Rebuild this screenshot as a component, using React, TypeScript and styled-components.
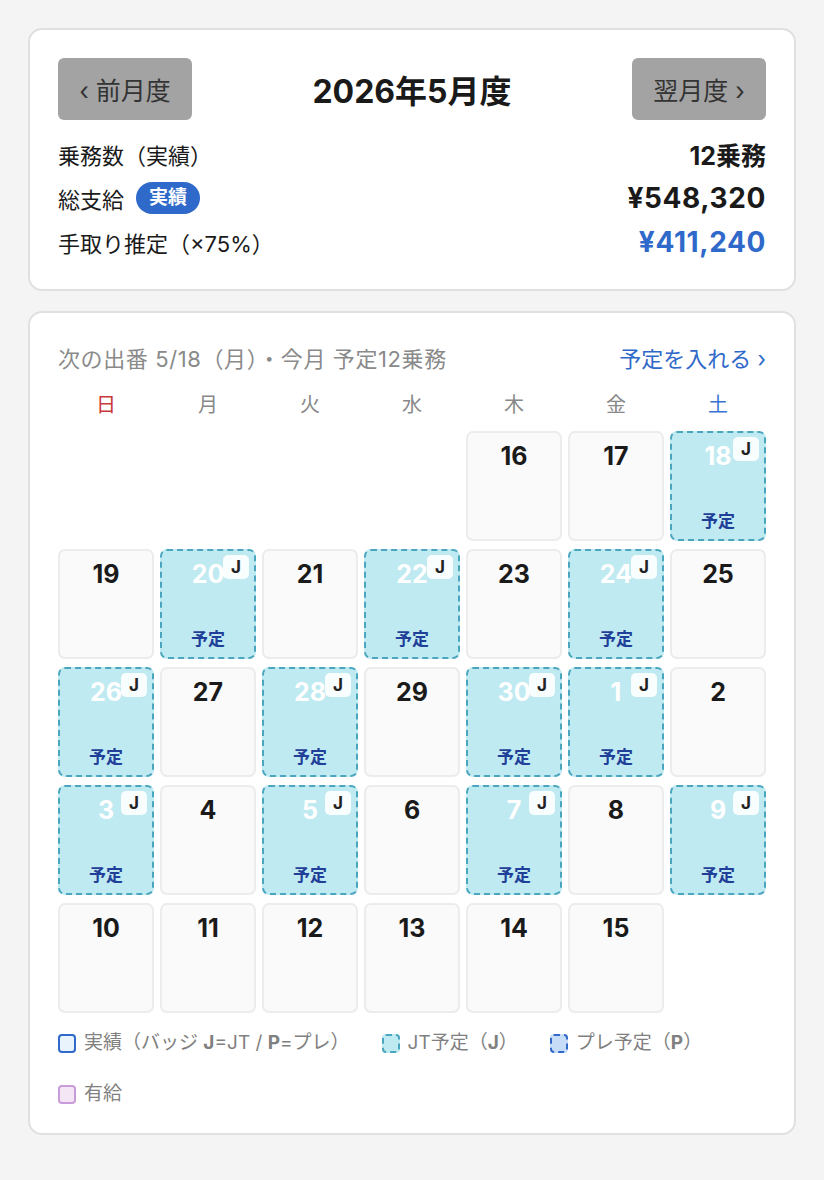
import React from 'react';
import styled, { createGlobalStyle } from 'styled-components';

const GlobalStyle = createGlobalStyle`
  * { box-sizing: border-box; }
  body {
    margin: 0;
    background: #f4f4f4;
    font-family: Inter, "Noto Sans CJK JP", sans-serif;
    color: #1a1a1a;
  }
`;

const Page = styled.div`
  padding: 28px;
  display: flex;
  flex-direction: column;
  gap: 20px;
`;

const Card = styled.section`
  background: #fff;
  border: 2px solid #e0e0e0;
  border-radius: 14px;
  padding: 28px 28px 25px;
`;

const NavRow = styled.div`
  display: flex;
  align-items: center;
  justify-content: space-between;
  margin-bottom: 12px;
`;

const NavButton = styled.button`
  width: 134px;
  height: 62px;
  border: none;
  border-radius: 6px;
  background: #a3a3a3;
  color: #333;
  font-family: inherit;
  font-size: 25px;
  padding: 0;
`;

const Title = styled.h1`
  margin: 0;
  font-size: 32px;
  font-weight: 700;
`;

const StatRow = styled.div`
  display: flex;
  align-items: center;
  justify-content: space-between;
  height: 44px;
`;

const StatLabel = styled.div`
  display: flex;
  align-items: center;
  gap: 12px;
  font-size: 22px;
`;

const StatValue = styled.div<{ $accent?: boolean; $big?: boolean }>`
  font-size: ${p => (p.$big ? '28px' : '25px')};
  font-weight: 700;
  letter-spacing: ${p => (p.$big ? '0.6px' : '0')};
  color: ${p => (p.$accent ? '#2f69c9' : '#1a1a1a')};
`;

const Pill = styled.span`
  background: #2f69c9;
  color: #fff;
  font-size: 19px;
  font-weight: 700;
  line-height: 26px;
  padding: 3px 13px;
  border-radius: 16px;
`;

const CalHeader = styled.div`
  display: flex;
  justify-content: space-between;
  align-items: center;
  font-size: 22px;
`;

const NextDuty = styled.div`
  color: #8a8a8a;
  letter-spacing: 0.6px;
`;

const AddLink = styled.a`
  color: #2f69c9;
`;

const Grid = styled.div`
  display: grid;
  grid-template-columns: repeat(7, 1fr);
  column-gap: 6px;
  row-gap: 8px;
`;

const Weekday = styled.div<{ $color: string }>`
  text-align: center;
  font-size: 20px;
  line-height: 28px;
  color: ${p => p.$color};
  padding: 18px 0 4px;
`;

const Cell = styled.div<{ $planned?: boolean }>`
  position: relative;
  height: 110px;
  border-radius: 7px;
  border: 2px ${p => (p.$planned ? 'dashed #4aa6be' : 'solid #ececec')};
  background: ${p => (p.$planned ? '#c0eaf1' : '#fafafa')};
  display: flex;
  flex-direction: column;
  align-items: center;
  justify-content: space-between;
  padding: 8px 0 7px;
`;

const EmptyCell = styled.div`
  height: 110px;
`;

const DayNum = styled.div<{ $planned?: boolean }>`
  font-size: 25px;
  font-weight: 700;
  color: ${p => (p.$planned ? '#fff' : '#1a1a1a')};
`;

const Badge = styled.span`
  position: absolute;
  top: 4px;
  right: 5px;
  width: 26px;
  height: 24px;
  border-radius: 5px;
  background: rgba(255, 255, 255, 0.88);
  display: flex;
  align-items: center;
  justify-content: center;
  font-size: 17px;
  font-weight: 700;
  color: #222;
`;

const PlanLabel = styled.div`
  font-size: 17px;
  font-weight: 700;
  color: #1f3f98;
`;

const Legend = styled.div`
  display: flex;
  flex-wrap: wrap;
  column-gap: 32px;
  row-gap: 23px;
  margin-top: 16px;
  font-size: 19px;
  line-height: 28px;
  color: #808080;
`;

const LegendItem = styled.div`
  display: flex;
  align-items: center;
  gap: 8px;
`;

const Swatch = styled.span<{ $bg: string; $border: string; $dashed?: boolean }>`
  display: inline-block;
  width: 18px;
  height: 19px;
  border-radius: 4px;
  background: ${p => p.$bg};
  border: 2px ${p => (p.$dashed ? 'dashed' : 'solid')} ${p => p.$border};
`;

type Day = { n: number; planned?: boolean } | null;

const planned = new Set([18, 20, 22, 24, 26, 28, 30, 1, 3, 5, 7, 9]);
const toDay = (n: number): Day => ({ n, planned: planned.has(n) });
const days: Day[] = [
  null, null, null, null,
  ...[16, 17, 18, 19, 20, 21, 22, 23, 24, 25, 26, 27, 28, 29, 30].map(toDay),
  ...[1, 2, 3, 4, 5, 6, 7, 8, 9, 10, 11, 12, 13, 14, 15].map(toDay),
  null,
];

const weekdays = [
  { l: '日', c: '#c9383a' },
  { l: '月', c: '#888' },
  { l: '火', c: '#888' },
  { l: '水', c: '#888' },
  { l: '木', c: '#888' },
  { l: '金', c: '#888' },
  { l: '土', c: '#3a74d2' },
];

export default function App() {
  return (
    <>
      <GlobalStyle />
      <Page>
        <Card>
          <NavRow>
            <NavButton>‹ 前月度</NavButton>
            <Title>2026年5月度</Title>
            <NavButton>翌月度 ›</NavButton>
          </NavRow>
          <StatRow>
            <StatLabel>乗務数（実績）</StatLabel>
            <StatValue>12乗務</StatValue>
          </StatRow>
          <StatRow>
            <StatLabel>
              総支給<Pill>実績</Pill>
            </StatLabel>
            <StatValue $big>¥548,320</StatValue>
          </StatRow>
          <StatRow>
            <StatLabel>手取り推定（×75%）</StatLabel>
            <StatValue $big $accent>¥411,240</StatValue>
          </StatRow>
        </Card>

        <Card>
          <CalHeader>
            <NextDuty>次の出番 5/18（月）・今月 予定12乗務</NextDuty>
            <AddLink>予定を入れる ›</AddLink>
          </CalHeader>
          <Grid>
            {weekdays.map(w => (
              <Weekday key={w.l} $color={w.c}>{w.l}</Weekday>
            ))}
            {days.map((d, i) =>
              d ? (
                <Cell key={i} $planned={d.planned}>
                  <DayNum $planned={d.planned}>{d.n}</DayNum>
                  {d.planned && <Badge>J</Badge>}
                  {d.planned && <PlanLabel>予定</PlanLabel>}
                </Cell>
              ) : (
                <EmptyCell key={i} />
              )
            )}
          </Grid>
          <Legend>
            <LegendItem>
              <Swatch $bg="#e9f3fc" $border="#2f69c9" />
              <span>実績（バッジ <b>J</b>=JT / <b>P</b>=プレ）</span>
            </LegendItem>
            <LegendItem>
              <Swatch $bg="#c0eaf1" $border="#4aa6be" $dashed />
              <span>JT予定（<b>J</b>）</span>
            </LegendItem>
            <LegendItem>
              <Swatch $bg="#c6dcf7" $border="#2f69c9" $dashed />
              <span>プレ予定（<b>P</b>）</span>
            </LegendItem>
            <LegendItem>
              <Swatch $bg="#f4e6f4" $border="#c79cd8" />
              <span>有給</span>
            </LegendItem>
          </Legend>
        </Card>
      </Page>
    </>
  );
}
